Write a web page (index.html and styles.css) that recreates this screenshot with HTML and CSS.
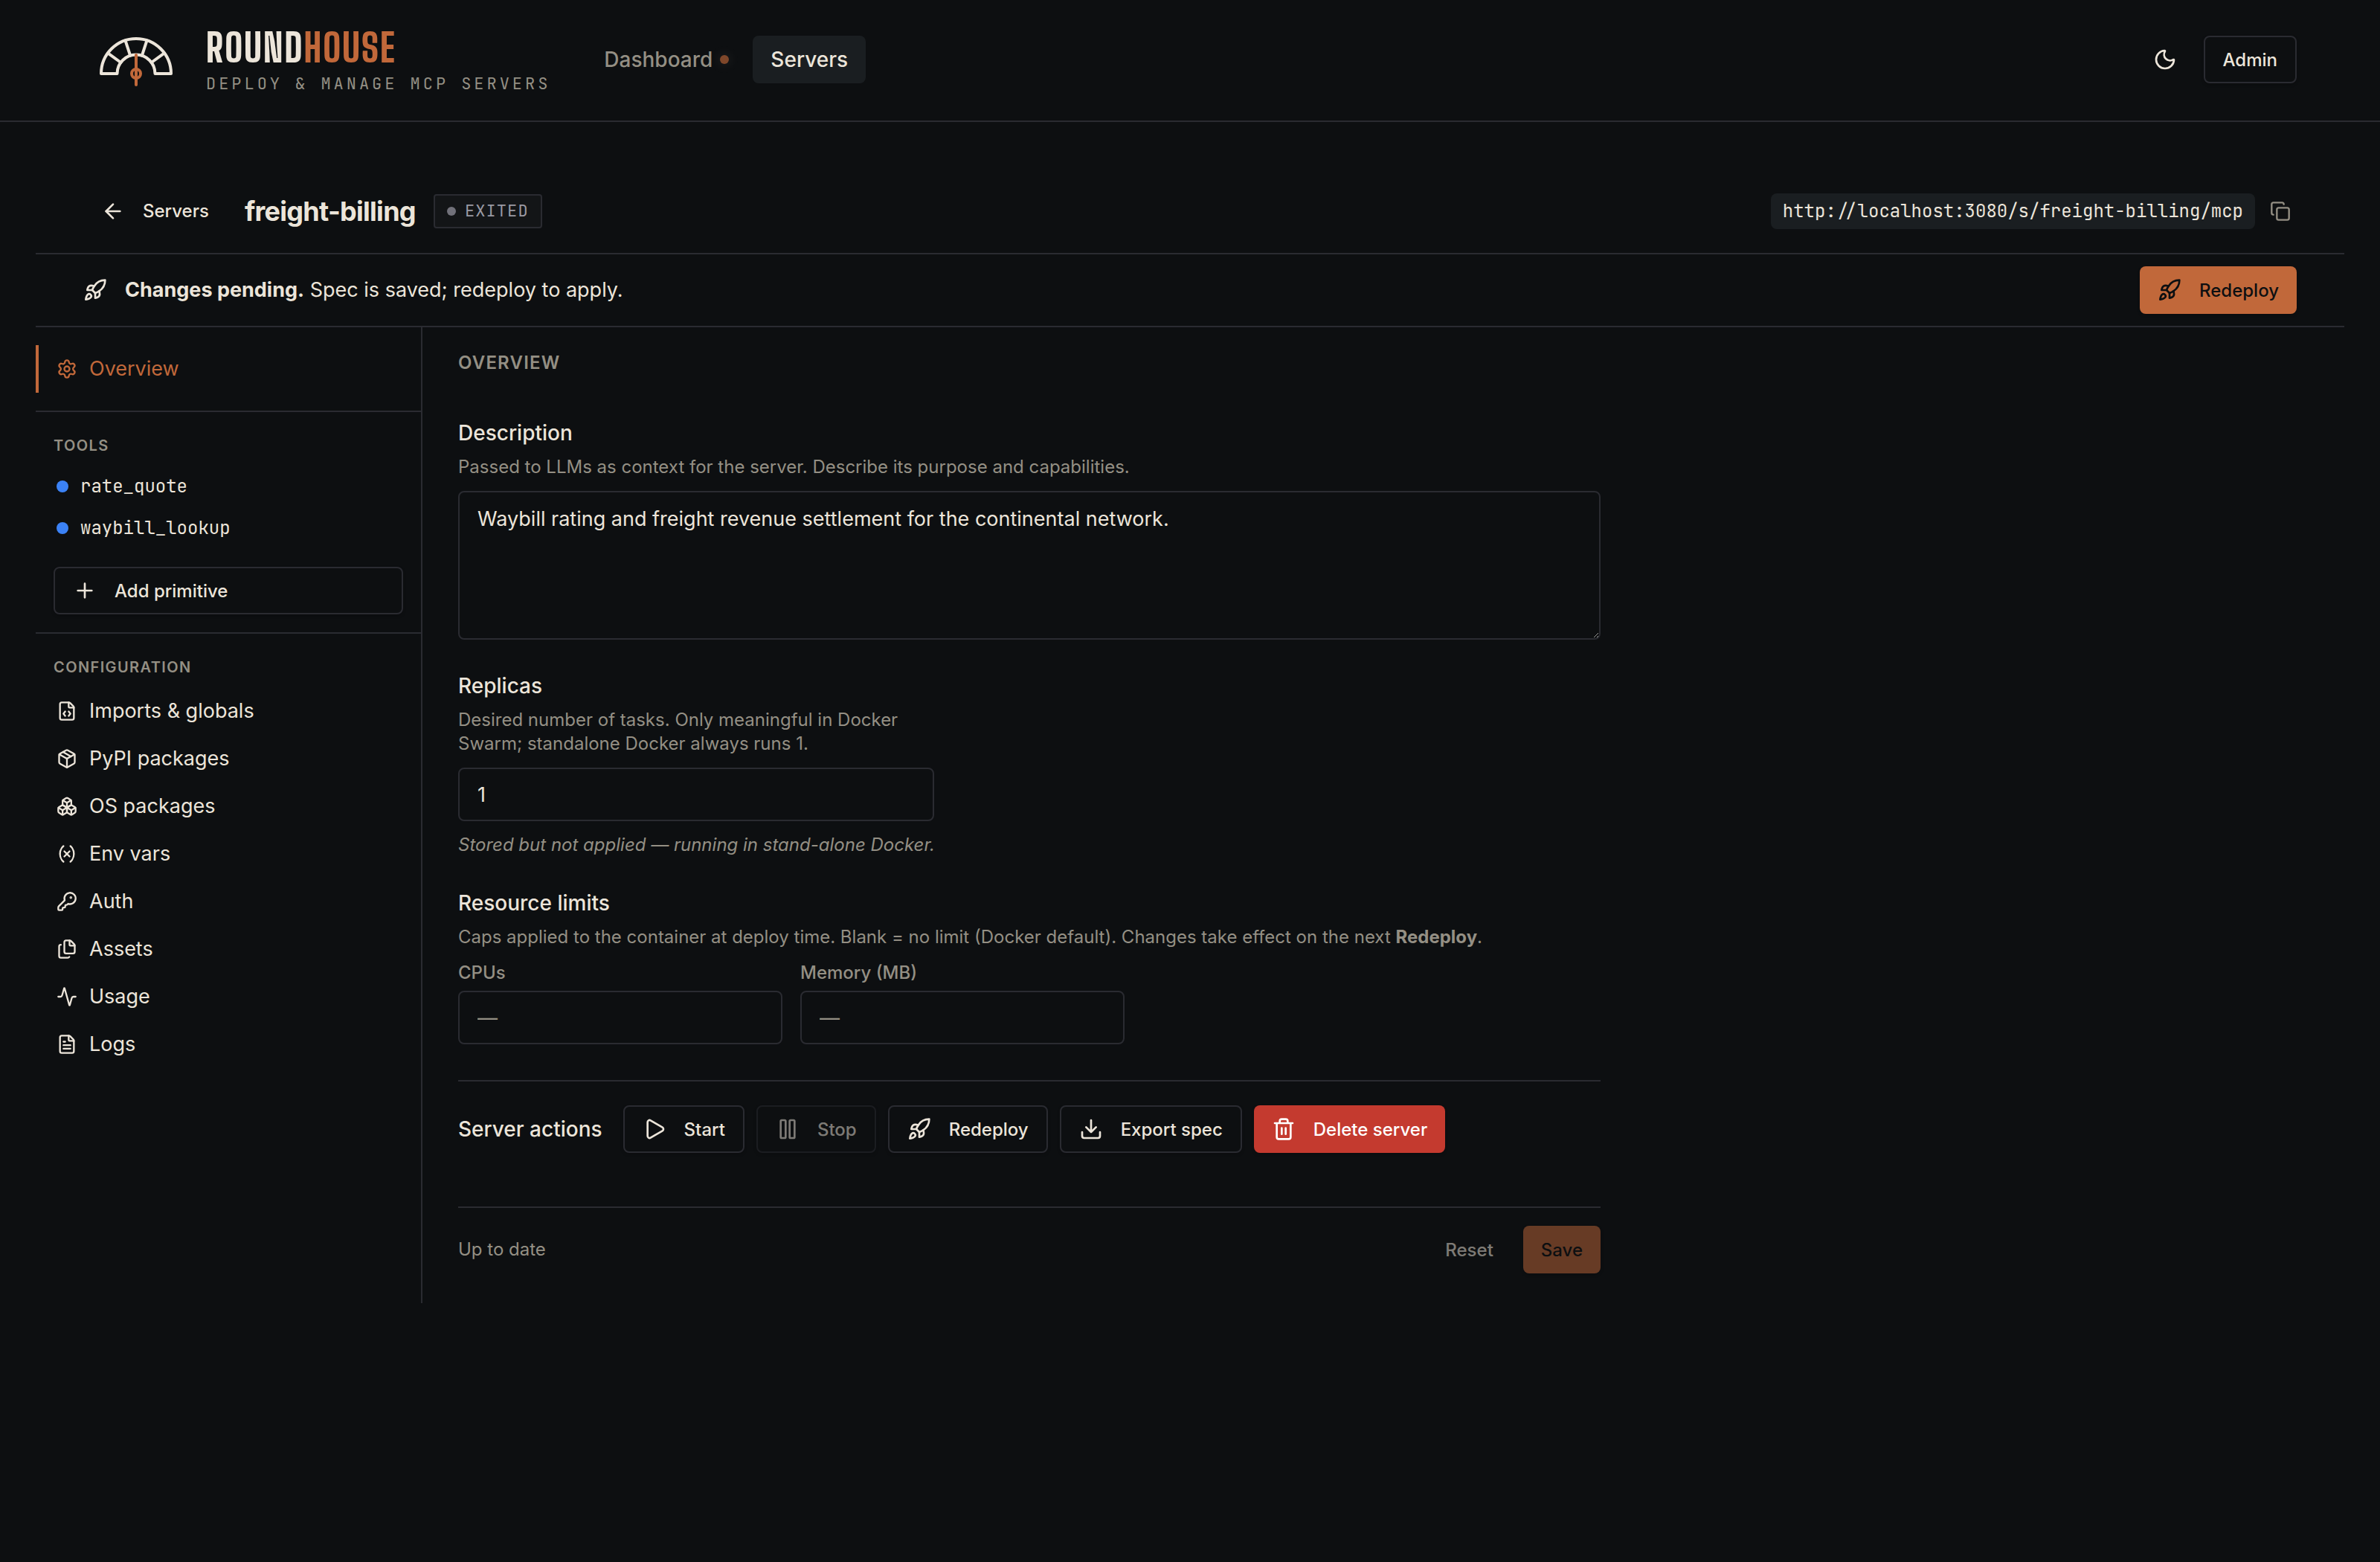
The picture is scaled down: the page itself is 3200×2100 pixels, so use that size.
FILE: index.html
```html
<!DOCTYPE html>
<html lang="en">
<head>
<meta charset="UTF-8" />
<meta name="viewport" content="width=device-width, initial-scale=1" />
<title>freight-billing - Roundhouse</title>
<link rel="stylesheet" href="styles.css">
</head>
<body>

<!-- shared icons -->
<svg class="sprite">
  <symbol id="i-rocket" viewBox="0 0 24 24">
    <path d="M4.5 16.5c-1.5 1.26-2 5-2 5s3.74-.5 5-2c.71-.84.7-2.13-.09-2.91a2.18 2.18 0 0 0-2.91-.09z"/>
    <path d="m12 15-3-3a22 22 0 0 1 2-3.95A12.88 12.88 0 0 1 22 2c0 2.72-.78 7.5-6 11a22.35 22.35 0 0 1-4 2z"/>
    <path d="M9 12H4s.55-3.03 2-4c1.62-1.08 5 0 5 0"/>
    <path d="M12 15v5s3.03-.55 4-2c1.08-1.62 0-5 0-5"/>
  </symbol>
  <symbol id="i-file" viewBox="0 0 24 24">
    <path d="M6 22a2 2 0 0 1-2-2V4a2 2 0 0 1 2-2h8a2.4 2.4 0 0 1 1.704.706l3.588 3.588A2.4 2.4 0 0 1 20 8v12a2 2 0 0 1-2 2z"/>
    <path d="M14 2v5a1 1 0 0 0 1 1h5"/>
  </symbol>
</svg>

<header class="topbar">
  <a class="brand" href="#">
    <svg class="brand-logo" viewBox="0 -4 104 72" fill="none" stroke-linecap="round" stroke-linejoin="round">
      <g stroke="#ece5da" stroke-width="4">
        <path d="M5 51a47 47 0 0 1 94 0H77.500a25.500 25.500 0 0 0-51 0z"/>
        <path d="M14 23.400 31.400 36M37.500 6.300 44.100 26.700M66.500 6.300 59.900 26.700M90 23.400 72.600 36"/>
      </g>
      <g stroke="#c1683a" stroke-width="4">
        <path d="M52 26v40"/>
        <circle cx="52" cy="51" r="6"/>
      </g>
    </svg>
    <span class="brand-text">
      <span class="brand-name">ROUND<span class="brand-accent">HOUSE</span></span>
      <span class="brand-tag">DEPLOY &amp; MANAGE MCP SERVERS</span>
    </span>
  </a>
  <nav class="topnav">
    <a href="#">Dashboard <span class="nav-dot"></span></a>
    <a href="#" class="active">Servers</a>
  </nav>
  <div class="topbar-right">
    <button type="button" class="icon-btn" aria-label="Toggle theme">
      <svg class="icon" viewBox="0 0 24 24"><path d="M20.985 12.486a9 9 0 1 1-9.473-9.472c.405-.022.617.46.402.803a6 6 0 0 0 8.268 8.268c.344-.215.825-.004.803.401"/></svg>
    </button>
    <button type="button" class="btn">Admin</button>
  </div>
</header>

<main class="page">
  <div class="page-head">
    <a class="back" href="#">
      <svg class="icon" viewBox="0 0 24 24"><path d="m12 19-7-7 7-7"/><path d="M19 12H5"/></svg>
      Servers
    </a>
    <h1>freight-billing</h1>
    <span class="badge"><span class="badge-dot"></span>EXITED</span>
    <div class="endpoint">
      <code>http://localhost:3080/s/freight-billing/mcp</code>
      <button type="button" class="copy-btn" aria-label="Copy URL">
        <svg class="icon icon-sm" viewBox="0 0 24 24"><rect x="8" y="8" width="14" height="14" rx="2"/><path d="M4 16c-1.100 0-2-.9-2-2V4c0-1.100.9-2 2-2h10c1.100 0 2 .9 2 2"/></svg>
      </button>
    </div>
  </div>

  <div class="banner">
    <svg class="icon"><use href="#i-rocket"/></svg>
    <p><strong>Changes pending.</strong> Spec is saved; redeploy to apply.</p>
    <button type="button" class="btn btn-primary">
      <svg class="icon"><use href="#i-rocket"/></svg>
      Redeploy
    </button>
  </div>

  <div class="layout">
    <aside class="sidebar">
      <div class="side-top">
        <a href="#" class="side-link active">
          <svg class="icon icon-sm" viewBox="0 0 24 24"><path d="M9.671 4.136a2.340 2.340 0 0 1 4.659 0 2.340 2.340 0 0 0 3.319 1.915 2.340 2.340 0 0 1 2.330 4.033 2.340 2.340 0 0 0 0 3.831 2.340 2.340 0 0 1-2.330 4.033 2.340 2.340 0 0 0-3.319 1.915 2.340 2.340 0 0 1-4.659 0 2.340 2.340 0 0 0-3.320-1.915 2.340 2.340 0 0 1-2.330-4.033 2.340 2.340 0 0 0 0-3.831A2.340 2.340 0 0 1 6.350 6.051a2.340 2.340 0 0 0 3.319-1.915"/><circle cx="12" cy="12" r="3"/></svg>
          Overview
        </a>
      </div>

      <div class="side-group">
        <h2 class="side-title">Tools</h2>
        <a href="#" class="tool-link"><span class="tool-dot"></span>rate_quote</a>
        <a href="#" class="tool-link"><span class="tool-dot"></span>waybill_lookup</a>
        <button type="button" class="btn btn-add">
          <svg class="icon" viewBox="0 0 24 24"><path d="M5 12h14M12 5v14"/></svg>
          Add primitive
        </button>
      </div>

      <div class="side-group">
        <h2 class="side-title">Configuration</h2>
        <a href="#" class="side-link">
          <svg class="icon icon-sm" viewBox="0 0 24 24"><use href="#i-file"/><path d="M10 12.500 8 15l2 2.500M14 12.500l2 2.500-2 2.500"/></svg>
          Imports &amp; globals
        </a>
        <a href="#" class="side-link">
          <svg class="icon icon-sm" viewBox="0 0 24 24"><path d="M11 21.730a2 2 0 0 0 2 0l7-4A2 2 0 0 0 21 16V8a2 2 0 0 0-1-1.730l-7-4a2 2 0 0 0-2 0l-7 4A2 2 0 0 0 3 8v8a2 2 0 0 0 1 1.730z"/><path d="M12 22V12"/><path d="M3.290 7 12 12l8.710-5"/><path d="m7.500 4.270 9 5.150"/></svg>
          PyPI packages
        </a>
        <a href="#" class="side-link">
          <svg class="icon icon-sm" viewBox="0 0 24 24"><path d="M2.970 12.920A2 2 0 0 0 2 14.630v3.240a2 2 0 0 0 .97 1.710l3 1.800a2 2 0 0 0 2.060 0L12 19v-5.500l-5-3-4.030 2.420Z"/><path d="m7 16.500-4.740-2.850M7 16.500l5-3M7 16.500v5.170"/><path d="M12 13.500V19l3.970 2.380a2 2 0 0 0 2.060 0l3-1.800a2 2 0 0 0 .97-1.710v-3.240a2 2 0 0 0-.97-1.710L17 10.500l-5 3Z"/><path d="m17 16.500-5-3M17 16.500l4.740-2.850M17 16.500v5.170"/><path d="M7.970 4.420A2 2 0 0 0 7 6.130v4.370l5 3 5-3V6.130a2 2 0 0 0-.97-1.710l-3-1.800a2 2 0 0 0-2.060 0l-3 1.800Z"/><path d="M12 8 7.260 5.150M12 8l4.740-2.850M12 13.500V8"/></svg>
          OS packages
        </a>
        <a href="#" class="side-link">
          <svg class="icon icon-sm" viewBox="0 0 24 24"><path d="M8 21s-4-3-4-9 4-9 4-9M16 3s4 3 4 9-4 9-4 9M15 9l-6 6M9 9l6 6"/></svg>
          Env vars
        </a>
        <a href="#" class="side-link">
          <svg class="icon icon-sm" viewBox="0 0 24 24"><path d="M2.586 17.414A2 2 0 0 0 2 18.828V21a1 1 0 0 0 1 1h3a1 1 0 0 0 1-1v-1a1 1 0 0 1 1-1h1a1 1 0 0 0 1-1v-1a1 1 0 0 1 1-1h.172a2 2 0 0 0 1.414-.586l.814-.814a6.500 6.500 0 1 0-4-4z"/><circle cx="16.500" cy="7.500" r=".5" fill="currentColor"/></svg>
          Auth
        </a>
        <a href="#" class="side-link">
          <svg class="icon icon-sm" viewBox="0 0 24 24"><path d="M15 2h-4a2 2 0 0 0-2 2v11a2 2 0 0 0 2 2h8a2 2 0 0 0 2-2V8"/><path d="M16.706 2.706A2.400 2.400 0 0 0 15 2v5a1 1 0 0 0 1 1h5a2.400 2.400 0 0 0-.706-1.706z"/><path d="M5 7a2 2 0 0 0-2 2v11a2 2 0 0 0 2 2h8a2 2 0 0 0 1.732-1"/></svg>
          Assets
        </a>
        <a href="#" class="side-link">
          <svg class="icon icon-sm" viewBox="0 0 24 24"><path d="M22 12h-2.480a2 2 0 0 0-1.930 1.460l-2.350 8.360a.25.25 0 0 1-.48 0L9.240 2.180a.25.25 0 0 0-.48 0l-2.350 8.360A2 2 0 0 1 4.490 12H2"/></svg>
          Usage
        </a>
        <a href="#" class="side-link">
          <svg class="icon icon-sm" viewBox="0 0 24 24"><use href="#i-file"/><path d="M10 9H8M16 13H8M16 17H8"/></svg>
          Logs
        </a>
      </div>
    </aside>

    <section class="content">
      <h2 class="content-title">Overview</h2>

      <form class="settings">
        <div class="field">
          <label class="field-label" for="description">Description</label>
          <p class="help">Passed to LLMs as context for the server. Describe its purpose and capabilities.</p>
          <textarea id="description" name="description">Waybill rating and freight revenue settlement for the continental network.</textarea>
        </div>

        <div class="field field-narrow">
          <label class="field-label" for="replicas">Replicas</label>
          <p class="help">Desired number of tasks. Only meaningful in Docker Swarm; standalone Docker always runs 1.</p>
          <input type="number" id="replicas" name="replicas" value="1" />
          <p class="help note">Stored but not applied — running in stand-alone Docker.</p>
        </div>

        <div class="field">
          <h3 class="field-label">Resource limits</h3>
          <p class="help">Caps applied to the container at deploy time. Blank = no limit (Docker default). Changes take effect on the next <strong>Redeploy</strong>.</p>
          <div class="limits">
            <div>
              <label for="cpus">CPUs</label>
              <input type="number" id="cpus" name="cpus" placeholder="—" />
            </div>
            <div>
              <label for="memory">Memory (MB)</label>
              <input type="number" id="memory" name="memory" placeholder="—" />
            </div>
          </div>
        </div>

        <div class="actions">
          <h3>Server actions</h3>
          <div class="actions-list">
            <button type="button" class="btn">
              <svg class="icon" viewBox="0 0 24 24"><path d="M5 5a2 2 0 0 1 3.008-1.728l11.997 6.998a2 2 0 0 1 .003 3.458l-12 7A2 2 0 0 1 5 19z"/></svg>
              Start
            </button>
            <button type="button" class="btn" disabled>
              <svg class="icon" viewBox="0 0 24 24"><rect x="14" y="3" width="5" height="18" rx="1"/><rect x="5" y="3" width="5" height="18" rx="1"/></svg>
              Stop
            </button>
            <button type="button" class="btn">
              <svg class="icon"><use href="#i-rocket"/></svg>
              Redeploy
            </button>
            <button type="button" class="btn">
              <svg class="icon" viewBox="0 0 24 24"><path d="M12 15V3M21 15v4a2 2 0 0 1-2 2H5a2 2 0 0 1-2-2v-4M7 10l5 5 5-5"/></svg>
              Export spec
            </button>
            <button type="button" class="btn btn-danger">
              <svg class="icon" viewBox="0 0 24 24"><path d="M10 11v6M14 11v6M19 6v14a2 2 0 0 1-2 2H7a2 2 0 0 1-2-2V6M3 6h18M8 6V4a2 2 0 0 1 2-2h4a2 2 0 0 1 2 2v2"/></svg>
              Delete server
            </button>
          </div>
        </div>

        <div class="form-footer">
          <span class="status">Up to date</span>
          <button type="reset" class="btn btn-ghost" disabled>Reset</button>
          <button type="submit" class="btn btn-primary" disabled>Save</button>
        </div>
      </form>
    </section>
  </div>
</main>

</body>
</html>
```

FILE: styles.css
```css
:root {
  --bg: #0d0f11;
  --surface: #1a1e21;
  --line: #2a2b31;
  --text: #ece5da;
  --muted: #948f84;
  --accent: #c1683a;
  --danger: #c43a2f;
  --mono: "JetBrains Mono", "DejaVu Sans Mono", monospace;
}
* {
  box-sizing: border-box;
}
body {
  margin: 0;
  background: var(--bg);
  color: var(--text);
  font-family: Inter, sans-serif;
  font-size: 27px;
  line-height: 36px;
}
h1, h2, h3, p {
  margin: 0;
}
a {
  color: inherit;
  text-decoration: none;
}
strong {
  font-weight: 700;
}
.sprite {
  display: none;
}
.icon {
  width: 32px;
  height: 32px;
  flex-shrink: 0;
  fill: none;
  stroke: currentColor;
  stroke-width: 2;
  stroke-linecap: round;
  stroke-linejoin: round;
}
.icon-sm {
  width: 28px;
  height: 28px;
}

/* buttons */
.btn {
  display: inline-flex;
  align-items: center;
  gap: 24px;
  height: 64px;
  padding: 0 24px;
  border: 2px solid var(--line);
  border-radius: 8px;
  background: var(--bg);
  color: var(--text);
  font-family: inherit;
  font-size: 24px;
  font-weight: 500;
  box-shadow: 0 2px 4px rgba(0,0,0,0.2);
  cursor: pointer;
}
.btn:disabled {
  opacity: 0.5;
  cursor: default;
}
.btn-primary {
  border: none;
  background: var(--accent);
  color: var(--bg);
}
.btn-danger {
  border: none;
  background: var(--danger);
  color: #fff;
}
.btn-ghost {
  border: none;
  background: none;
  box-shadow: none;
}

/* top bar */
.topbar {
  display: flex;
  align-items: center;
  height: 164px;
  padding: 0 112px 2px 131px;
  border-bottom: 2px solid var(--line);
}
.brand {
  display: flex;
  align-items: center;
  gap: 42px;
}
.brand-logo {
  width: 104px;
  height: 72px;
}
.brand-text {
  display: flex;
  flex-direction: column;
  padding-top: 10px;
}
.brand-name {
  font-family: "Big Shoulders Display", "Liberation Sans Narrow", "Liberation Sans", sans-serif;
  font-size: 52px;
  font-weight: 800;
  line-height: 56px;
  letter-spacing: 0.04em;
}
.brand-accent {
  color: var(--accent);
}
.brand-tag {
  font-family: var(--mono);
  font-size: 22px;
  line-height: 42px;
  letter-spacing: 0.18em;
  color: var(--muted);
}
.topnav {
  display: flex;
  gap: 8px;
  margin-left: 48px;
}
.topnav a {
  display: flex;
  align-items: center;
  gap: 10px;
  height: 64px;
  padding: 0 24px;
  border-radius: 8px;
  font-size: 28px;
  font-weight: 500;
  color: var(--muted);
}
.topnav .active {
  background: var(--surface);
  color: var(--text);
}
.nav-dot {
  width: 12px;
  height: 12px;
  border-radius: 50%;
  background: #7f472a;
  box-shadow: 0 0 16px rgba(236,229,218,0.15);
}
.topbar-right {
  display: flex;
  align-items: center;
  gap: 20px;
  margin-left: auto;
}
.icon-btn, .copy-btn {
  display: flex;
  align-items: center;
  justify-content: center;
  width: 64px;
  height: 64px;
  padding: 0;
  border: none;
  background: none;
  color: var(--text);
  cursor: pointer;
}
.copy-btn {
  width: 44px;
  height: 44px;
  color: var(--muted);
}

/* page heading */
.page {
  padding: 64px 48px;
}
.page-head {
  display: flex;
  align-items: center;
  height: 114px;
  padding: 0 64px;
  border-bottom: 2px solid var(--line);
}
.back {
  display: flex;
  align-items: center;
  gap: 24px;
  padding: 0 24px;
  font-size: 24px;
  font-weight: 500;
}
.page-head h1 {
  margin: 0 24px;
  font-size: 36px;
  font-weight: 700;
  letter-spacing: -0.02em;
}
.badge {
  display: flex;
  align-items: center;
  gap: 12px;
  height: 46px;
  padding: 0 16px;
  border: 2px solid var(--line);
  border-radius: 4px;
  background: #131517;
  color: #9a9aa4;
  font-family: var(--mono);
  font-size: 22px;
  letter-spacing: 0.05em;
}
.badge-dot {
  width: 12px;
  height: 12px;
  border-radius: 50%;
  background: #71717a;
}
.endpoint {
  display: flex;
  align-items: center;
  gap: 12px;
  margin-left: auto;
}
.endpoint code {
  padding: 6px 16px;
  border-radius: 8px;
  background: var(--surface);
  font-family: var(--mono);
  font-size: 24px;
}

/* pending changes */
.banner {
  display: flex;
  align-items: center;
  gap: 24px;
  padding: 16px 64px;
  border-bottom: 2px solid var(--line);
}
.banner .btn {
  margin-left: auto;
}

/* sidebar */
.layout {
  display: grid;
  grid-template-columns: 520px 1fr;
}
.sidebar {
  border-right: 2px solid var(--line);
}
.side-top {
  padding: 24px 0;
}
.side-group {
  border-top: 2px solid var(--line);
}
.side-title {
  padding: 30px 24px 12px;
  font-size: 20px;
  font-weight: 600;
  line-height: 30px;
  letter-spacing: 0.07em;
  text-transform: uppercase;
  color: var(--muted);
}
.side-link {
  display: flex;
  align-items: center;
  gap: 16px;
  height: 64px;
  padding: 0 24px;
  border-left: 4px solid transparent;
}
.side-link.active {
  border-color: var(--accent);
  color: var(--accent);
}
.tool-link {
  display: flex;
  align-items: center;
  gap: 16px;
  height: 56px;
  padding: 0 28px;
  font-family: var(--mono);
  font-size: 24px;
}
.tool-dot {
  width: 16px;
  height: 16px;
  border-radius: 50%;
  background: #3b82f6;
}
.btn-add {
  display: flex;
  width: calc(100% - 48px);
  margin: 24px;
}

/* content */
.content {
  padding: 32px 48px 40px;
}
.content-title {
  margin-bottom: 60px;
  font-size: 24px;
  font-weight: 600;
  line-height: 32px;
  letter-spacing: 0.05em;
  text-transform: uppercase;
  color: var(--muted);
}
.settings {
  max-width: 1536px;
}
.field {
  margin-bottom: 44px;
}
.field-narrow {
  max-width: 640px;
}
.field-label {
  display: block;
  margin-bottom: 12px;
  font-size: 28px;
  font-weight: 500;
}
.help {
  margin-bottom: 16px;
  font-size: 24px;
  line-height: 32px;
  color: var(--muted);
}
.note {
  margin: 16px 0 0;
  font-style: italic;
  white-space: nowrap;
}
input, textarea {
  display: block;
  width: 100%;
  padding: 16px 24px;
  border: 2px solid var(--line);
  border-radius: 8px;
  background: var(--bg);
  color: var(--text);
  font-family: inherit;
  font-size: 27px;
}
input {
  height: 72px;
  appearance: textfield;
}
input::placeholder {
  color: var(--muted);
}
textarea {
  height: 200px;
  line-height: 40px;
  resize: vertical;
}
.limits {
  display: grid;
  grid-template-columns: 1fr 1fr;
  gap: 24px;
  max-width: 896px;
}
.limits label {
  display: block;
  margin-bottom: 8px;
  font-size: 24px;
  font-weight: 500;
  line-height: 32px;
  color: var(--muted);
}
.actions {
  display: flex;
  align-items: center;
  gap: 28px;
  margin-top: 48px;
  padding: 32px 0 72px;
  border-top: 2px solid var(--line);
}
.actions h3 {
  font-size: 28px;
  font-weight: 500;
}
.actions-list {
  display: flex;
  flex-wrap: wrap;
  gap: 16px;
}
.form-footer {
  display: flex;
  align-items: center;
  gap: 16px;
  padding-top: 24px;
  border-top: 2px solid var(--line);
}
.status {
  margin-right: auto;
  font-size: 24px;
  color: var(--muted);
}
```
